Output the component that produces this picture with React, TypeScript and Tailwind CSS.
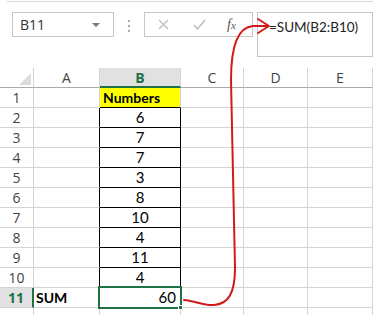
import React from 'react'

const cols = [
  { key: 'A', w: 'w-[66px]' },
  { key: 'B', w: 'w-[81px]' },
  { key: 'C', w: 'w-[63px]' },
  { key: 'D', w: 'w-[64px]' },
  { key: 'E', w: 'w-[65px]' },
]

const values = [6, 7, 7, 3, 8, 10, 4, 11, 4]

const uiFont = { fontFamily: '"Open Sans", "Liberation Sans", sans-serif' }
const cellFont = { fontFamily: 'Lato, "Open Sans", sans-serif' }

function RowHeader({ n, active }: { n: number; active?: boolean }) {
  return (
    <div
      className={
        'w-[34px] h-[20px] flex items-center justify-center text-[14px] border-b border-[#d4d4d4] ' +
        (active
          ? 'bg-[#e1e1e1] text-[#217346] font-bold border-r-2 border-r-[#217346]'
          : 'text-[#444] border-r border-r-[#d4d4d4]')
      }
    >
      {n}
    </div>
  )
}

function Blank({ w }: { w: string }) {
  return <div className={w + ' h-[20px] border-r border-b border-[#d4d4d4]'} />
}

export default function App() {
  return (
    <div className="relative w-[381px] h-[326px] bg-white overflow-hidden" style={uiFont}>
      <div className="ml-[7px] mt-[1px] w-[366px] border-t border-[#d8d8d8]" />

      {/* formula bar */}
      <div className="flex items-start pl-[12px] mt-[10px]">
        <div className="w-[102px] h-[25px] border border-[#c6c6c6] flex items-center justify-between pl-[7px] pr-[13px] text-[14px] text-[#333]">
          <span>B11</span>
          <span className="w-0 h-0 border-l-[4px] border-r-[4px] border-t-[4px] border-l-transparent border-r-transparent border-t-[#777]" />
        </div>
        <div className="ml-[14px] mt-[8px] flex flex-col gap-[3px]">
          <span className="w-[2px] h-[2px] bg-[#aaa]" />
          <span className="w-[2px] h-[2px] bg-[#aaa]" />
          <span className="w-[2px] h-[2px] bg-[#aaa]" />
        </div>
        <div className="ml-[14px] w-[109px] h-[25px] border border-[#c6c6c6] flex items-center pl-[13px]">
          <svg width="11" height="11" viewBox="0 0 11 11">
            <path d="M1 1 L10 10 M10 1 L1 10" stroke="#bdbdbd" strokeWidth="1.3" fill="none" />
          </svg>
          <svg width="13" height="11" viewBox="0 0 13 11" className="ml-[24px]">
            <path d="M1 6 L4.5 10 L12 1" stroke="#bdbdbd" strokeWidth="1.5" fill="none" />
          </svg>
          <span
            className="ml-[21px] text-[14px] italic text-[#555]"
            style={{ fontFamily: '"Liberation Serif", serif' }}
          >
            f<span className="text-[11px]">x</span>
          </span>
        </div>
        <div
          className="ml-[4px] w-[116px] h-[45px] border border-[#c6c6c6] pl-[11px] pt-[4px] text-[13.5px] text-[#222]"
          style={cellFont}
        >
          =SUM(B2:B10)
        </div>
      </div>

      {/* grid */}
      <div className="mt-[11px] text-[14px]">
        <div className="flex">
          <div className="w-[34px] h-[20px] border-r border-b border-[#ababab] border-r-[#d4d4d4] flex items-end justify-end pr-[2px] pb-[2px]">
            <svg width="12" height="12" viewBox="0 0 12 12">
              <path d="M12 0 L12 12 L0 12 Z" fill="#dcdcdc" />
            </svg>
          </div>
          {cols.map((c) =>
            c.key === 'B' ? (
              <div
                key={c.key}
                className={c.w + ' h-[20px] bg-[#e1e1e1] border-r border-r-[#d4d4d4] border-b-2 border-b-[#217346] flex items-center justify-center text-[#217346] font-bold'}
              >
                B
              </div>
            ) : (
              <div
                key={c.key}
                className={c.w + ' h-[20px] border-r border-r-[#d4d4d4] border-b border-b-[#ababab] flex items-center justify-center text-[#444]'}
              >
                {c.key}
              </div>
            )
          )}
        </div>

        {/* row 1 */}
        <div className="flex" style={cellFont}>
          <div style={uiFont}>
            <RowHeader n={1} />
          </div>
          <Blank w="w-[66px]" />
          <div className="w-[81px] h-[20px] bg-[#ffff00] border-r border-r-[#d4d4d4] border-b border-b-black pl-[3px] font-bold text-black text-[14px] leading-[19px]">
            Numbers
          </div>
          <Blank w="w-[63px]" />
          <Blank w="w-[64px]" />
          <Blank w="w-[65px]" />
        </div>

        {values.map((v, i) => (
          <div key={i} className="flex" style={cellFont}>
            <div style={uiFont}>
              <RowHeader n={i + 2} />
            </div>
            <div className="w-[66px] h-[20px] border-r border-r-black border-b border-b-[#d4d4d4]" />
            <div className="w-[81px] h-[20px] border-r border-b border-black flex items-center justify-center text-black text-[15px]">
              {v}
            </div>
            <Blank w="w-[63px]" />
            <Blank w="w-[64px]" />
            <Blank w="w-[65px]" />
          </div>
        ))}

        {/* row 11 */}
        <div className="flex" style={cellFont}>
          <div style={uiFont}>
            <RowHeader n={11} active />
          </div>
          <div className="w-[66px] h-[20px] border-r border-b border-[#d4d4d4] pl-[2px] font-bold text-black text-[14px] leading-[19px]">
            SUM
          </div>
          <div className="relative w-[81px] h-[20px] border-r border-b border-[#d4d4d4] flex items-center justify-end pr-[4px] text-black text-[15px]">
            60
            <div className="absolute -left-[2px] -top-[2px] w-[84px] h-[23px] border-2 border-[#217346]" />
            <div className="absolute -right-[3px] -bottom-[3px] w-[5px] h-[5px] bg-[#217346] border border-white" />
          </div>
          <Blank w="w-[63px]" />
          <Blank w="w-[64px]" />
          <Blank w="w-[65px]" />
        </div>

        {/* row 12, cut off */}
        <div className="flex h-[7px] overflow-hidden">
          <div className="w-[34px] border-r border-[#d4d4d4]" />
          <div className="w-[66px] border-r border-[#d4d4d4]" />
          <div className="w-[81px] border-r border-[#d4d4d4]" />
          <div className="w-[63px] border-r border-[#d4d4d4]" />
          <div className="w-[64px] border-r border-[#d4d4d4]" />
          <div className="w-[65px] border-r border-[#d4d4d4]" />
        </div>
      </div>

      {/* red arrow */}
      <svg className="absolute left-0 top-0 pointer-events-none" width="381" height="326" viewBox="0 0 381 326">
        <path
          d="M184 300 C 196 301, 204 306, 214 305 C 228 304, 235 294, 235 268 L 231 80 C 231 45, 238 27, 253 26 L 268 26"
          stroke="#d11a1a"
          strokeWidth="2"
          fill="none"
          strokeLinecap="round"
        />
        <path d="M258 19 L 269 26 L 258 33" stroke="#d11a1a" strokeWidth="2" fill="none" strokeLinecap="round" strokeLinejoin="round" />
      </svg>
    </div>
  )
}
